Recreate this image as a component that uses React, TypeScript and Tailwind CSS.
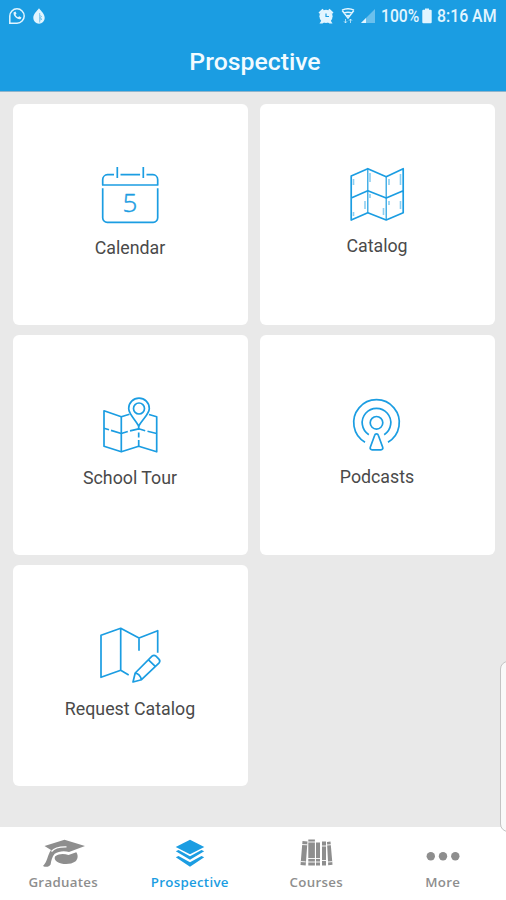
import type { ReactNode } from "react";

const CalendarIcon = () => (
    <>
        <path d="M19.3 3v11M45.3 3v11M22.5 10.7h19.6M16 10.7H9.5a5 5 0 0 0-4.8 5V21h55v-5.3a5 5 0 0 0-4.8-5h-6.4" />
        <path d="M4.7 24.3v29.5a4.5 4.5 0 0 0 4.5 4.5h46a4.5 4.5 0 0 0 4.5-4.5V24.3" />
        <text x="32" y="48.3" textAnchor="middle" stroke="#1b9de2" strokeWidth="0.4" fill="#1b9de2" className="font-['Open_Sans',sans-serif] text-[26px] font-light">5</text>
    </>
);

const CatalogIcon = () => (
    <>
        <path d="M6.2 12 22.8 4.7l18.4 8 17-8v44L41.2 56l-18.4-7.3L6.2 56zM6.2 34l16.6-7.3L41.2 34l17-7.3" />
        <path d="M22.8 4.7v44M41.2 12.7V56" strokeWidth="1.2" />
        <path d="M8.5 15v6M25 9v9M44 15v6M8.5 48v4M20 45v-8M38.5 51v-7M55.5 45v-8M55.5 10v11M25 30v4M44 37v4" strokeWidth="1.6" opacity="0.5" />
    </>
);

const TourIcon = () => (
    <>
        <path d="M31.5 19.2 23.3 21.8 6 15.8v35.4l17.3 5.6 17.4-5.6 18 5.6v-35L51 19.5" />
        <path d="M6 33.2l5 1.6M13 35.4l10.3 3.1 6.5-2M32 35.8l8.7-2M40.7 33.8l6.5 2M49.5 36.2l9.2 2.3" />
        <path d="M23.3 21.8v35M40.7 31v4M40.7 37.5v5M40.7 45v6.2" />
        <path d="M40.7 31C36.5 23.5 30.7 19 30.7 13.5a10.3 10.3 0 0 1 20.6 0C51.3 19 45 23.5 40.7 31z" fill="white" />
        <circle cx="41" cy="13.5" r="5.5" />
    </>
);

const PodcastIcon = () => (
    <>
        <circle cx="31.5" cy="27.8" r="6.3" />
        <path d="M23.8 39.7a14.3 14.3 0 1 1 15.4 0" />
        <path d="M20 47.2a22.8 22.8 0 1 1 23 0" />
        <path d="M29.7 40.2c.5-1.8 3.1-1.8 3.6 0l4.4 12c.5 1.5-.3 2.6-1.8 2.6h-8.8c-1.5 0-2.3-1.1-1.8-2.6z" />
    </>
);

const RequestIcon = () => (
    <>
        <path d="M59.7 27.7v-22L41 13 22.7 3.3 3 10.3v42l19.7-7 8 4.7M22.7 3.3v42M41 13v12.7" />
        <path d="M35 57l2.2-9L54 31.2c1.4-1.3 2.6-1.3 4 0l2.9 2.9c1.3 1.4 1.3 2.6 0 4L43.5 54.7zM50.5 34.8l7 6.8M37.2 48c3.2.6 5.3 2.9 6.3 6.7" />
    </>
);

const GraduateIcon = () => (
    <svg viewBox="0 0 46 30" className="h-[30px] w-[46px]" fill="currentColor">
        <path d="M4.5 8 24.5 1.8l20.5 6.2L29 14c-4.5-1.5-10.5-1-14.3 1.8-2.5 2.7-3.5 7-4.1 10.7-1.5 2.6-4.8 3-7.6 1.5 4.5-4.5 4.3-10.5 8-16z" />
        <path d="M11.5 13.5c3-3.8 8-4.8 15-4.6" fill="none" stroke="white" strokeWidth="1.3" />
        <path d="M15 18.5c4.5-3.3 9-2.8 13.5-1.6l7.8-2.7c2.2 3.3 1.6 7-1 9.3-4.8 3.4-13.5 3.2-18.3.2-2.2-1.5-2.8-3.2-2-5.2z" />
    </svg>
);

const LayersIcon = () => (
    <svg viewBox="0 0 30 30" className="h-[30px] w-[30px]" fill="currentColor">
        <path d="M15 1.8 29.3 9 15 16.3.7 9z" />
        <path d="M.8 13.3 3.5 12 15 18.3 26.5 12l2.7 1.3L15 21.8z" />
        <path d="M.8 19.3 3.5 18 15 24.3 26.5 18l2.7 1.3L15 28.8z" />
    </svg>
);

const BooksIcon = () => (
    <svg viewBox="0 0 34 30" className="h-[30px] w-[34px]" fill="currentColor">
        <path d="M3.5 3l5 .5L6.7 27.5l-5.2-.5zM9.3 1.5h6.6v26H9.3zM17 4.5h4v23h-4zM23 3.5h4v24h-4zM28 4l3.5-.5 2 23.3-4.3.5z" />
        <path d="M1.7 23.5l5 .4M9 20.5h7M9 4h7M9 24h7M17 20.5h4M17 24h4M23 8h4M23 22.5h4M28.8 24l4.7-.4M2.5 6.5l6 .3M28 7l4-.3" stroke="white" strokeWidth="0.9" />
    </svg>
);

const MoreIcon = () => (
    <svg viewBox="0 0 34 30" className="h-[30px] w-[34px]" fill="currentColor">
        <circle cx="4.8" cy="18.3" r="4.2" />
        <circle cx="17" cy="18.3" r="4.2" />
        <circle cx="29.3" cy="18.3" r="4.2" />
    </svg>
);

const tiles: { label: string; icon: ReactNode; labelClass: string }[] = [
    { label: "Calendar", icon: <CalendarIcon />, labelClass: "mt-2" },
    { label: "Catalog", icon: <CatalogIcon />, labelClass: "mt-1.5" },
    { label: "School Tour", icon: <TourIcon />, labelClass: "mt-[7px]" },
    { label: "Podcasts", icon: <PodcastIcon />, labelClass: "mt-1.5" },
    { label: "Request Catalog", icon: <RequestIcon />, labelClass: "mt-2" },
];

const tabs = [
    { label: "Graduates", icon: <GraduateIcon />, active: false },
    { label: "Prospective", icon: <LayersIcon />, active: true },
    { label: "Courses", icon: <BooksIcon />, active: false },
    { label: "More", icon: <MoreIcon />, active: false },
];

function StatusBar() {
    return (
        <div className="flex h-8 items-center justify-between pr-2 pl-2 text-[#e2f5ff]">
            <div className="flex items-center gap-[7px]">
                <svg viewBox="0 0 18 18" className="h-[18px] w-[18px]" fill="none" stroke="currentColor" strokeWidth="1.5">
                    <path d="M1.8 16.2V9a7.2 7.2 0 1 1 7.2 7.2z" />
                    <path d="M5.7 5.2c-1.2 3 3.8 8 7 6.8l.8-1.5-2.3-1.3-1.2 1c-1.2-.5-2-1.3-2.5-2.5l1-1-1-2.2z" fill="currentColor" stroke="none" />
                </svg>
                <svg viewBox="0 0 12 16" className="h-4 w-3" fill="currentColor">
                    <path d="M6 .3C8.5 3.5 11.7 6 11.7 10a5.7 5.7 0 0 1-11.4 0C.3 6 3.5 3.5 6 .3z" />
                    <path d="M6.7 5v9.5M6.7 7.5l2 1-2 1.5 2.3 1.2-2.3 1" fill="none" stroke="#73c2ec" strokeWidth="0.9" />
                </svg>
            </div>
            <div className="flex items-center">
                <svg viewBox="0 0 16 16" className="mr-[7px] h-4 w-4" fill="currentColor">
                    <circle cx="8" cy="8.3" r="6.6" />
                    <path d="M.5 4.5 4.5.7 6 2.2 2 6zM15.5 4.5 11.5.7 10 2.2 14 6zM1.5 15.5l2.5-4 2.5 2.5-2 1.5zM14.5 15.5l-2.5-4L9.5 14l2 1.5z" />
                    <path d="M8 5.5v3h3" fill="none" stroke="#1b9de2" strokeWidth="1.2" />
                </svg>
                <svg viewBox="0 0 14 16" className="mr-[5px] h-4 w-3.5" fill="none" stroke="currentColor" strokeWidth="1.5">
                    <path d="M1 2.2c3.5-1.7 8.5-1.7 12 0M3 5.2c2.5-1.2 5.5-1.2 8 0M5 8c1.3-.7 2.7-.7 4 0M1.2 2.5 7 10l5.8-7.5" />
                    <path d="M4.5 11v4M3 13.3 4.5 15 6 13.3M9.5 15v-4M8 12.7 9.5 11l1.5 1.7" strokeWidth="1" opacity="0.7" />
                </svg>
                <svg viewBox="0 0 16 16" className="h-4 w-4" fill="currentColor">
                    <path d="M1 15 15 1v14z" opacity="0.4" />
                    <path d="M1 15l5-5v5z" />
                </svg>
                <span className="ml-[5px] w-[38px] origin-left scale-x-[0.87] text-[18px] leading-8 font-medium whitespace-nowrap">100%</span>
                <svg viewBox="0 0 10 16" className="ml-[3px] h-4 w-2.5" fill="currentColor">
                    <path d="M3 .5h4v1.2h1.7a1 1 0 0 1 1 1v11.5a1 1 0 0 1-1 1H1.3a1 1 0 0 1-1-1V2.7a1 1 0 0 1 1-1H3z" />
                </svg>
                <span className="ml-[5px] w-[61px] origin-left scale-x-[0.88] text-[18px] leading-8 font-medium whitespace-nowrap">8:16 AM</span>
            </div>
        </div>
    );
}

export default function App() {
    return (
        <div className="relative flex h-[900px] w-[506px] flex-col overflow-hidden bg-[#e9e9e9] font-[Roboto,sans-serif]">
            <header className="h-[92px] shrink-0 border-b border-[#8fb4cb] bg-[#1b9de2]">
                <StatusBar />
                <h1 className="pt-3.5 pl-1 text-center text-[24.8px] leading-8 font-medium text-[#f2fbff]">Prospective</h1>
            </header>

            <main className="grid flex-1 grid-cols-2 content-start gap-x-3 gap-y-2.5 pt-[11.75px] pr-[11.5px] pl-[12.5px]">
                {tiles.map((tile) => (
                    <div key={tile.label} className="flex h-[220.8px] flex-col items-center rounded-md bg-white pt-[60px]">
                        <svg viewBox="0 0 64 64" className="h-16 w-16 shrink-0" fill="none" stroke="#1b9de2" strokeWidth="1.7" strokeLinejoin="round">
                            {tile.icon}
                        </svg>
                        <span className={`text-[17.8px] leading-6 text-[#4a4a4a] ${tile.labelClass}`}>{tile.label}</span>
                    </div>
                ))}
            </main>

            <nav className="grid h-[73px] shrink-0 grid-cols-4 bg-white">
                {tabs.map((tab) => (
                    <div key={tab.label} className={`flex flex-col items-center pt-[11px] font-semibold ${tab.active ? "text-[#1b9de2]" : "text-[#8e8e8e]"}`}>
                        {tab.icon}
                        <span className="mt-[5px] font-['Open_Sans',sans-serif] text-[13.3px] leading-[18px] tracking-[0.3px]">{tab.label}</span>
                    </div>
                ))}
            </nav>

            {/* Edge panel peeking in from the right */}
            <div className="absolute top-[661px] left-[500px] h-[171px] w-5 rounded-l-lg border border-[#c4c4c4] bg-[#f9f9f9]" />
        </div>
    );
}
